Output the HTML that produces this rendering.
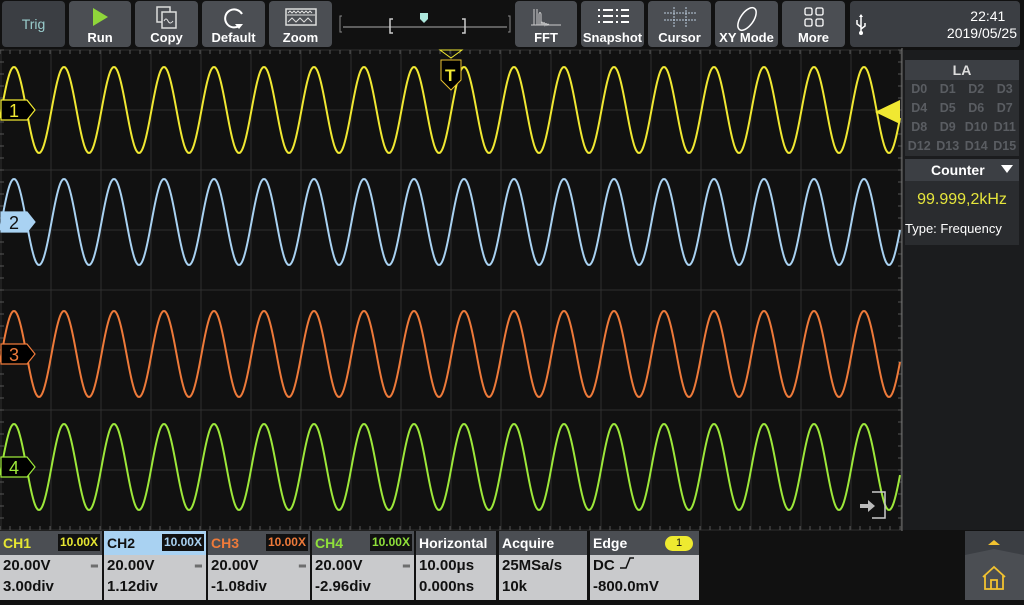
<!DOCTYPE html><html><head><style>
body{margin:0;width:1024px;height:600px;background:#111;overflow:hidden;font-family:"Liberation Sans",sans-serif;position:relative}
.b{position:absolute;top:1px;height:46px;background:#4b4e53;border-radius:4px;color:#fff;font-weight:bold;font-size:13px;text-align:center}
.b span{position:absolute;left:0;right:0;bottom:2px}
.b svg{position:absolute;left:50%;transform:translateX(-50%);top:4px}
.p{position:absolute;top:531px;height:69px;background:#c9cacc;font-weight:bold;font-size:15px;color:#111}
.p .h{height:24px;background:#4b4e53;color:#fff;padding-left:3px;line-height:24px;font-size:14px;position:relative}
.p .l{padding-left:3px;line-height:21px}
.x{position:absolute;right:2px;top:3px;background:#111;font-size:12px;line-height:17px;padding:0 2px}
.dc{position:absolute;right:4px;top:30px;font-size:10px}
.la{position:absolute;left:905px;width:114px;font-size:13px;font-weight:bold;color:#5a5d62}
</style></head><body>
<div class="b" style="left:2px;width:63px;background:#3b3e43;color:#9cc;font-weight:normal;font-size:14px;line-height:46px">Trig</div>
<div class="b" style="left:69px;width:62px"><svg width="20" height="24"><polygon points="3,3 18,12 3,21" fill="#8fd63a"/></svg><span>Run</span></div>
<div class="b" style="left:135px;width:63px"><svg width="26" height="26"><rect x="3" y="2" width="13" height="15" fill="none" stroke="#ddd" stroke-width="1.5"/><rect x="8" y="7" width="14" height="16" fill="#4b4e53" stroke="#ddd" stroke-width="1.5"/><path d="M10 16q2-4 4 0t5 0" fill="none" stroke="#ddd"/></svg><span>Copy</span></div>
<div class="b" style="left:202px;width:63px"><svg width="26" height="26"><path d="M18 21A9 9 0 1 1 21 9" fill="none" stroke="#fff" stroke-width="2"/><polygon points="14,19 22,19 18,24" fill="#fff"/></svg><span>Default</span></div>
<div class="b" style="left:269px;width:63px"><svg width="34" height="24"><rect x="2" y="4" width="30" height="16" fill="none" stroke="#ddd" stroke-width="1.5"/><path d="M3 10h28" stroke="#ddd"/><path d="M4 8l2-2 2 2 2-2 2 2 2-2 2 2 2-2 2 2 2-2 2 2 2-2 2 2M4 17l4-4 4 4 4-4 4 4 4-4 4 4" fill="none" stroke="#ddd"/></svg><span>Zoom</span></div>
<svg style="position:absolute;left:338px;top:10px" width="174" height="28"><path d="M4 6h-2v16h2M170 6h2v16h-2" stroke="#888" fill="none"/><path d="M5 17h164" stroke="#aaa"/><path d="M55 9h-3v14h3M124 9h3v14h-3" stroke="#ccc" fill="none" stroke-width="1.5"/><path d="M82 3h8v6l-4 4-4-4z" fill="#aee8dd"/></svg>
<div class="b" style="left:515px;width:62px"><svg width="34" height="24"><path d="M2 20h30M5 20V4M8 20V4M10 20V9q1-3 2 0v11q1-6 2 0q1-5 2 0q1-3 2 0q1-2 2 0h2" fill="none" stroke="#ccc"/></svg><span>FFT</span></div>
<div class="b" style="left:581px;width:63px"><svg width="34" height="22"><path d="M2 5h2M2 11h2M2 17h2M7 5h10M7 11h10M7 17h10M20 5h2M20 11h2M20 17h2M25 5h8M25 11h8M25 17h8" stroke="#fff" stroke-width="2"/></svg><span>Snapshot</span></div>
<div class="b" style="left:648px;width:63px"><svg width="36" height="24"><path d="M2 8h32M2 15h32M12 2v20M24 2v20" stroke="#bcd" stroke-dasharray="2 1"/></svg><span>Cursor</span></div>
<div class="b" style="left:715px;width:63px"><svg width="28" height="28"><ellipse cx="14" cy="14" rx="13" ry="6.5" transform="rotate(-55 14 14)" fill="none" stroke="#fff" stroke-width="1.5"/></svg><span>XY Mode</span></div>
<div class="b" style="left:782px;width:63px"><svg width="24" height="24"><g fill="none" stroke="#fff" stroke-width="1.3"><rect x="3" y="3" width="7" height="7" rx="1.5"/><rect x="14" y="3" width="7" height="7" rx="1.5"/><rect x="3" y="14" width="7" height="7" rx="1.5"/><rect x="14" y="14" width="7" height="7" rx="1.5"/></g></svg><span>More</span></div>
<div style="position:absolute;left:850px;top:1px;width:170px;height:46px;background:#3b3e43;border-radius:4px;color:#fff;font-size:14px;text-align:right">
<svg style="position:absolute;left:4px;top:12px" width="14" height="24"><path d="M7 2v18M7 14l-4-3v-4M7 16l4-3v-3" stroke="#fff" fill="none" stroke-width="1.5"/><circle cx="7" cy="20" r="2" fill="#fff"/><path d="M5 4l2-3 2 3z" fill="#fff"/></svg>
<div style="position:absolute;right:3px;top:7px;line-height:17px">22:41&nbsp;&nbsp;&nbsp;<br>2019/05/25</div></div>
<svg style="position:absolute;left:0;top:48px" width="903" height="483" id="sc"></svg>
<div style="position:absolute;left:903px;top:50px;width:121px;height:480px;background:#1b1c1e"></div>
<div class="la" style="top:60px;height:20px;background:#3c3f44;color:#ddd;text-align:center;line-height:20px;font-size:14px">LA</div>
<div class="la" style="top:80px;height:76px;background:#2c2e31;line-height:19px;font-size:12.5px"><div style="display:grid;grid-template-columns:repeat(4,1fr);text-align:center">
<div>D0</div><div>D1</div><div>D2</div><div>D3</div><div>D4</div><div>D5</div><div>D6</div><div>D7</div><div>D8</div><div>D9</div><div>D10</div><div>D11</div><div>D12</div><div>D13</div><div>D14</div><div>D15</div></div></div>
<div class="la" style="top:159px;height:22px;background:#3c3f44;color:#fff;line-height:22px;font-size:14px"><span style="margin-left:26px">Counter</span><span style="position:absolute;right:6px;top:6px;border:6px solid transparent;border-top:8px solid #fff;border-bottom:0"></span></div>
<div class="la" style="top:181px;height:64px;background:#2a2c2f;font-weight:normal"><div style="color:#e6e63c;font-size:16px;text-align:center;margin-top:10px">99.999,2kHz</div><div style="color:#fff;font-size:13px;margin-top:12px">Type:&nbsp;Frequency</div></div>
<div class="p" style="left:0;width:102px"><div class="h" style="color:#e6e632">CH1<span class="x" style="color:#e6e632">10.00X</span></div><div class="l">20.00V</div><div class="l">3.00div</div><span class="dc">═</span></div>
<div class="p" style="left:104px;width:102px"><div class="h" style="background:#a9d2f2;color:#111">CH2<span class="x" style="color:#a9d2f2">10.00X</span></div><div class="l">20.00V</div><div class="l">1.12div</div><span class="dc">═</span></div>
<div class="p" style="left:208px;width:102px"><div class="h" style="color:#ee7a3a">CH3<span class="x" style="color:#ee7a3a">10.00X</span></div><div class="l">20.00V</div><div class="l">-1.08div</div><span class="dc">═</span></div>
<div class="p" style="left:312px;width:102px"><div class="h" style="color:#8fe03a">CH4<span class="x" style="color:#8fe03a">10.00X</span></div><div class="l">20.00V</div><div class="l">-2.96div</div><span class="dc">═</span></div>
<div class="p" style="left:416px;width:80px"><div class="h">Horizontal</div><div class="l">10.00μs</div><div class="l">0.000ns</div></div>
<div class="p" style="left:499px;width:88px"><div class="h">Acquire</div><div class="l">25MSa/s</div><div class="l">10k</div></div>
<div class="p" style="left:590px;width:109px"><div class="h">Edge<span style="position:absolute;right:6px;top:5px;width:28px;height:15px;border-radius:8px;background:#eeea30;color:#111;font-size:11px;line-height:15px;text-align:center;font-weight:normal">1</span></div><div class="l">DC <svg width="16" height="14"><path d="M1 12h6l4-10h4" fill="none" stroke="#111" stroke-width="1.5"/></svg></div><div class="l">-800.0mV</div></div>
<div style="position:absolute;left:965px;top:531px;width:59px;height:69px;background:#3b3e43"><svg width="59" height="69"><path d="M0 24L29 18 59 24V69H0z" fill="#4b4e53"/><path d="M23 14l6-5 6 5z" fill="#f2c230"/><path d="M18 46l11-10 11 10M20 44v14h18V44M26 58v-9h6v9" fill="none" stroke="#f2c230" stroke-width="1.8"/></svg></div>
<script>
var s=document.getElementById('sc'),h='';
for(var x=0;x<=900;x+=50)h+='<path d="M'+(x+1)+' 2V482" stroke="#303030"/>';
for(var y=2;y<=482;y+=60)h+='<path d="M0 '+y+'H902" stroke="#303030"/>';
for(var x=0;x<902;x+=10)h+='<path d="M'+x+' 2v4M'+x+' 482v-4" stroke="#555"/>';
for(var y=2;y<482;y+=12)h+='<path d="M0 '+y+'h4M902 '+y+'h-4" stroke="#555"/>';
h+='<path d="M902 0V483" stroke="#777"/>';
var ch=[[62,'#f0e832'],[174,'#a9d2f2'],[306,'#ee7a3a'],[419,'#9de83a']];
ch.forEach(function(c){var d='M';for(var x=0;x<=900;x+=1){d+=x+' '+(c[0]-43*Math.cos(2*Math.PI*(x-14)/50)).toFixed(1)+' ';}h+='<path d="'+d+'" fill="none" stroke="'+c[1]+'" stroke-width="2"/>';});
var mk=[[62,'1','#f0e832',0],[174,'2','#a9d2f2',1],[306,'3','#ee7a3a',0],[419,'4','#9de83a',0]];
mk.forEach(function(m){h+='<path d="M1 '+(m[0]-10)+'h26l8 10-8 10H1z" fill="'+(m[3]?m[2]:'#000')+'" stroke="'+m[2]+'" stroke-width="1.2"/><text x="9" y="'+(m[0]+7)+'" font-family="Liberation Sans" font-size="18" fill="'+(m[3]?'#111':m[2])+'">'+m[1]+'</text>';});
h+='<path d="M440 2h22l-11 8z" fill="none" stroke="#f0e832"/><path d="M441 12h20v20l-10 10-10-10z" fill="#000" stroke="#e8c030"/><text x="445" y="33" font-family="Liberation Sans" font-weight="bold" font-size="17" fill="#f0e832">T</text>';
h+='<path d="M875 64l25-12v24z" fill="#f0e832"/>';
h+='<path d="M860 456h8v-4l7 6-7 6v-4h-8z" fill="#bbb"/><path d="M872 444h13v26h-13" fill="none" stroke="#ccc" stroke-width="1.5"/>';
s.innerHTML=h;
</script>
</body></html>
